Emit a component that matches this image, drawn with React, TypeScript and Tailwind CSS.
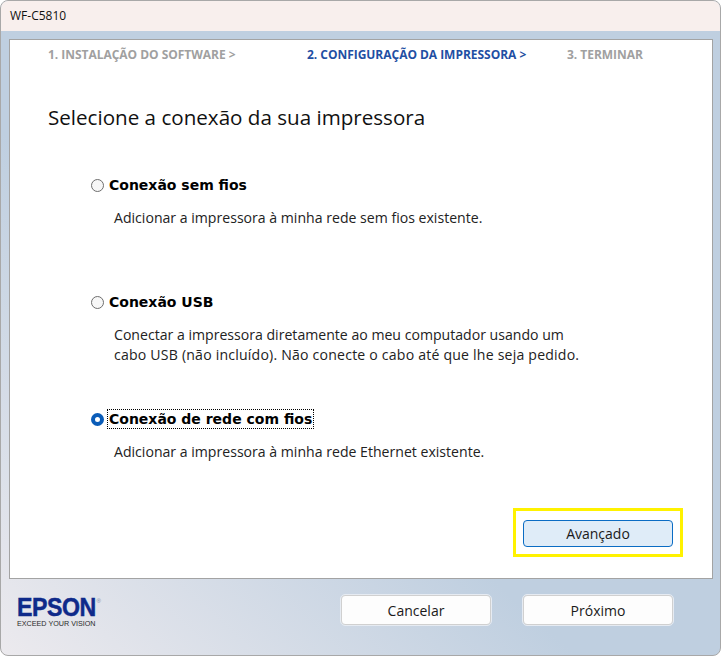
import React, { useState } from 'react';

const sans = "font-['Open_Sans','Noto_Sans',sans-serif]";

const Radio = ({ checked }: { checked: boolean }) =>
  checked ? (
    <span className="w-[13px] h-[13px] rounded-full border-[4px] border-[#0a5cb8] bg-white shrink-0" />
  ) : (
    <span className="w-[13px] h-[13px] rounded-full border border-[#6e6e6e] bg-[#f7f7f7] shrink-0" />
  );

const options = [
  {
    key: 'wifi',
    label: 'Conexão sem fios',
    lines: [{ text: 'Adicionar a impressora à minha rede sem fios existente.', className: '' }],
    className: 'h-[117px]',
  },
  {
    key: 'usb',
    label: 'Conexão USB',
    lines: [
      { text: 'Conectar a impressora diretamente ao meu computador usando um', className: '' },
      { text: 'cabo USB (não incluído). Não conecte o cabo até que lhe seja pedido.', className: 'tracking-[0.2px]' },
    ],
    className: 'h-[117px]',
  },
  {
    key: 'eth',
    label: 'Conexão de rede com fios',
    lines: [{ text: 'Adicionar a impressora à minha rede Ethernet existente.', className: '' }],
    className: 'h-[60px]',
  },
];

const FooterButton = ({ label }: { label: string }) => (
  <button className="w-[150px] h-[30px] rounded-[4px] border border-[#d0d0d0] bg-[#fdfdfd] text-[14px] text-[#1a1a1a] outline outline-1 outline-[#e6ebf2]">
    {label}
  </button>
);

const App: React.FC = () => {
  const [selected, setSelected] = useState('eth');

  return (
    <div className={`w-[721px] h-[656px] flex flex-col bg-gradient-to-tr from-[#eceaee] via-[#bfcfe0] via-40% to-[#bfcfe0] border border-[#a8a8a8] rounded-[8px] overflow-hidden ${sans}`}>
      <div className="h-[30px] shrink-0 flex items-center pl-[9px] bg-[#f8efed] text-[12px] text-[#111]">WF-C5810</div>

      <div className="h-[8px] shrink-0" />

      <main className="ml-[8px] w-[704px] h-[540px] shrink-0 flex flex-col bg-white border border-[#a3a3a3]">
        {/* Etapas */}
        <div className="h-[28px] mt-[1px] flex items-center pl-[38px] text-[12px] font-bold tracking-[-0.03px] whitespace-nowrap text-[#a0a0a0]">
          <span className="w-[259px]">1. INSTALAÇÃO DO SOFTWARE &gt;</span>
          <span className="w-[260px] text-[#1f4fa3]">2. CONFIGURAÇÃO DA IMPRESSORA &gt;</span>
          <span>3. TERMINAR</span>
        </div>

        <h1 className="mt-[34px] ml-[38px] text-[20.6px] leading-[28px] text-[#111]">Selecione a conexão da sua impressora</h1>

        <div className="mt-[44px] ml-[81px] flex flex-col">
          {options.map(opt => (
            <div key={opt.key} className={opt.className} onClick={() => setSelected(opt.key)}>
              <div className="flex items-center gap-[3px] h-[20px]">
                <Radio checked={selected === opt.key} />
                <span
                  className={`font-['DejaVu_Sans',sans-serif] font-bold text-[14px] leading-[18px] px-[1px] text-black whitespace-nowrap border border-dotted ${
                    selected === opt.key ? 'border-black' : 'border-transparent'
                  }`}
                >
                  {opt.label}
                </span>
              </div>
              <div className="mt-[13px] ml-[23px] text-[14.1px] leading-[20px] text-[#222] whitespace-nowrap">
                {opt.lines.map(line => (
                  <div key={line.text} className={line.className}>{line.text}</div>
                ))}
              </div>
            </div>
          ))}
        </div>

        <div className="flex-1" />

        <div className="flex justify-end pr-[29px] pb-[21px]">
          <div className="border-[3px] border-[#fff200] w-[170px] h-[49px] pt-[2px] flex items-center justify-center">
            <button className="w-[150px] h-[27px] rounded-[4px] border border-[#0a6cc4] bg-[#dfecf8] text-[14px] text-[#1a1a1a]">
              Avançado
            </button>
          </div>
        </div>
      </main>

      <footer className="flex-1 flex items-start pl-[16px] pr-[47px]">
        <div className="mt-[18px] flex flex-col text-[#0f2a8a] font-['Liberation_Sans',sans-serif]">
          <div className="flex items-start">
            <span className="font-bold text-[26px] leading-[20px] tracking-[-0.5px] scale-x-[0.89] origin-left whitespace-nowrap [-webkit-text-stroke:0.5px_#0f2a8a]">
              EPSON
            </span>
            <span className="-ml-[9px] text-[6px] leading-[8px] text-[#7b8aa8]">®</span>
          </div>
          <span className="mt-[2px] text-[7.2px] leading-[9px] text-[#2a2a2a] whitespace-nowrap">EXCEED YOUR VISION</span>
        </div>
        <div className="ml-auto mt-[16px] flex gap-[32px]">
          <FooterButton label="Cancelar" />
          <FooterButton label="Próximo" />
        </div>
      </footer>
    </div>
  );
};

export default App;
